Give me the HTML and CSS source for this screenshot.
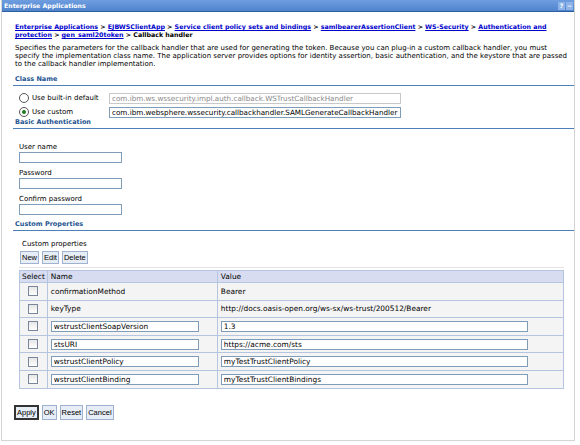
FILE: index.html
```html
<!DOCTYPE html>
<html lang="en">
<head>
    <meta charset="UTF-8">
    <title>Callback handler</title>
    <link rel="stylesheet" href="styles.css">
</head>
<body>
    <div class="portlet">
        <div class="titlebar">
            <span class="title">Enterprise Applications</span>
            <span class="tools"><span class="tool">?</span><span class="tool">&minus;</span></span>
        </div>
        <div class="content">
            <div class="crumbs">
                <a href="#">Enterprise Applications</a> &gt; <a href="#">EJBWSClientApp</a> &gt; <a href="#">Service client policy sets and bindings</a> &gt; <a href="#">samlbearerAssertionClient</a> &gt; <a href="#">WS-Security</a> &gt; <a href="#">Authentication and</a><br><a href="#">protection</a> &gt; <a href="#">gen_saml20token</a> &gt; Callback handler
            </div>
            <p class="desc">Specifies the parameters for the callback handler that are used for generating the token. Because you can plug-in a custom callback handler, you must specify the implementation class name. The application server provides options for identity assertion, basic authentication, and the keystore that are passed to the callback handler implementation.</p>

            <h2 class="first">Class Name</h2>
            <div class="radios">
                <div class="radio-row">
                    <span class="radio"></span>
                    <span class="radio-label">Use built-in default</span>
                    <input class="field wide" type="text" value="com.ibm.ws.wssecurity.impl.auth.callback.WSTrustCallbackHandler" disabled>
                </div>
                <div class="radio-row">
                    <span class="radio on"></span>
                    <span class="radio-label">Use custom</span>
                    <input class="field wide" type="text" value="com.ibm.websphere.wssecurity.callbackhandler.SAMLGenerateCallbackHandler">
                </div>
            </div>

            <h2>Basic Authentication</h2>
            <div class="auth">
                <label>User name</label>
                <input class="field short" type="text">
                <label>Password</label>
                <input class="field short" type="password">
                <label>Confirm password</label>
                <input class="field short last" type="password">
            </div>

            <h2>Custom Properties</h2>
            <div class="props">
                <div class="props-title">Custom properties</div>
                <div class="toolbar">
                    <button class="btn">New</button>
                    <button class="btn">Edit</button>
                    <button class="btn">Delete</button>
                </div>
                <table class="grid">
                    <tr>
                        <th class="sel">Select</th>
                        <th class="name">Name</th>
                        <th>Value</th>
                    </tr>
                    <tr>
                        <td class="sel"><span class="check"></span></td>
                        <td>confirmationMethod</td>
                        <td>Bearer</td>
                    </tr>
                    <tr>
                        <td class="sel"><span class="check"></span></td>
                        <td>keyType</td>
                        <td>http://docs.oasis-open.org/ws-sx/ws-trust/200512/Bearer</td>
                    </tr>
                    <tr>
                        <td class="sel"><span class="check"></span></td>
                        <td><input class="field cell-name" type="text" value="wstrustClientSoapVersion"></td>
                        <td><input class="field cell-value" type="text" value="1.3"></td>
                    </tr>
                    <tr>
                        <td class="sel"><span class="check"></span></td>
                        <td><input class="field cell-name" type="text" value="stsURI"></td>
                        <td><input class="field cell-value" type="text" value="https://acme.com/sts"></td>
                    </tr>
                    <tr>
                        <td class="sel"><span class="check"></span></td>
                        <td><input class="field cell-name" type="text" value="wstrustClientPolicy"></td>
                        <td><input class="field cell-value" type="text" value="myTestTrustClientPolicy"></td>
                    </tr>
                    <tr>
                        <td class="sel"><span class="check"></span></td>
                        <td><input class="field cell-name" type="text" value="wstrustClientBinding"></td>
                        <td><input class="field cell-value" type="text" value="myTestTrustClientBindings"></td>
                    </tr>
                </table>
            </div>

            <div class="actions">
                <button class="btn default">Apply</button>
                <button class="btn">OK</button>
                <button class="btn">Reset</button>
                <button class="btn">Cancel</button>
            </div>
        </div>
    </div>
</body>
</html>
```

FILE: styles.css
```css
body { margin: 0; background: #fff; font-family: "DejaVu Sans", Verdana, sans-serif; font-size: 7px; color: #000; }
.portlet { margin-left: 1px; width: 574px; height: 441px; border: 1px solid #d4d4d4; border-top: none; box-sizing: border-box; }
.titlebar { height: 12px; display: flex; align-items: center; justify-content: space-between; background: linear-gradient(#6f9ee0, #4f83cc); border-bottom: 1px solid #2f5f9f; box-sizing: border-box; padding-left: 2px; }
.title { color: #fff; font-weight: bold; font-size: 6.2px; }
.tools { display: flex; gap: 1px; padding-right: 1px; }
.tool { width: 7px; height: 8px; background: #8db3e8; color: #fff; font-size: 6px; font-weight: bold; line-height: 8px; text-align: center; }
.content { padding: 11px 0 0 13px; }
.crumbs { font-weight: bold; font-size: 6.3px; line-height: 8px; white-space: nowrap; }
.crumbs a { color: #0000cc; }
.desc { margin: 5px 3px 0 0; line-height: 8px; }
h2 { margin: 0 0 0 -2px; padding: 0 0 2px 2px; font-size: 6.5px; color: #24548f; border-bottom: 1px solid #4f7fb8; line-height: 8px; }
h2.first { margin-top: 7px; }
.radios { padding: 6px 0 0 4px; display: flex; flex-direction: column; gap: 2px; }
.radio-row { display: flex; align-items: center; height: 12px; }
.radio { width: 8px; height: 8px; border: 1px solid #555; border-radius: 50%; background: #fff; margin-right: 3px; display: flex; align-items: center; justify-content: center; }
.radio.on::after { content: ""; width: 4px; height: 4px; border-radius: 50%; background: #1f7a1f; }
.radio-label { width: 77px; }
.field { font-family: "DejaVu Sans", Verdana, sans-serif; font-size: 7.4px; height: 11px; padding: 0 2px; border: 1px solid #7f9db9; box-sizing: border-box; background: #fff; color: #000; outline: none; }
.field:disabled { border-color: #c8c8c8; color: #888; background: #fff; }
.wide { width: 292px; font-size: 7.2px; }
.auth { padding: 14px 0 0 4px; display: flex; flex-direction: column; align-items: flex-start; }
.auth label { line-height: 8px; margin-bottom: 1px; }
.auth .field { margin-bottom: 6px; }
.auth .field.last { margin-bottom: 5px; }
.short { width: 103px; }
.props { padding: 9px 0 0 4px; }
.props-title { padding-left: 3px; line-height: 8px; }
.toolbar { display: flex; gap: 3px; padding: 3px 0 3px 1px; border-bottom: 1px solid #e4e4e4; width: 544px; }
.btn { font-family: "Liberation Sans", Arial, sans-serif; font-size: 7.5px; height: 13px; padding: 0 1px; background: #e6edf6; border: 1px solid #9fb3d0; color: #000; }
.grid { border-collapse: collapse; width: 545px; margin-top: 2px; border: 1px solid #b5c5df; font-size: 7.4px; }
.grid th { background: #d7dcf0; font-weight: normal; text-align: left; height: 11px; padding: 0 3px; border: 1px solid #b5c5df; }
.grid td { background: #f4f4f4; height: 16.6px; padding: 0 3px; border: 1px solid #b5c5df; }
.grid .sel { width: 22px; padding: 0 2px; text-align: center; }
.grid .name { width: 163px; }
.check { display: inline-block; width: 8px; height: 8px; border: 1px solid #7a869a; background: linear-gradient(#e6e6e6, #fff); vertical-align: middle; }
.cell-name { width: 148px; }
.cell-value { width: 307px; }
.actions { display: flex; gap: 3px; padding: 16px 0 0 0; margin-left: -1px; }
.actions .btn { height: 15px; }
.btn.default { border: 2px solid #333; }
```
